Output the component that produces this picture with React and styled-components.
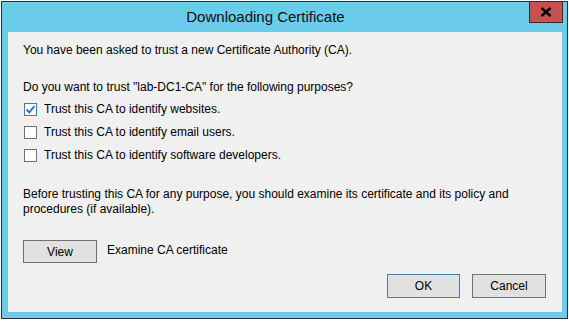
import React from "react";
import styled, { createGlobalStyle } from "styled-components";

const Global = createGlobalStyle`
  html, body { margin: 0; padding: 0; background: #ffffff; }
  body { font-family: "Segoe UI", "Liberation Sans", Arial, sans-serif; }
`;

const Window = styled.div`
  box-sizing: border-box;
  margin: 1px 0 0 1px;
  width: 567px;
  height: 318px;
  border: 1px solid #2d2d2d;
  background: #6acbea;
  display: flex;
  flex-direction: column;
`;

const TitleBar = styled.div`
  height: 29px;
  display: grid;
  grid-template-columns: 1fr auto;
  align-items: start;
`;

const Title = styled.div`
  font-family: "Segoe UI", "Liberation Sans", Arial, sans-serif;
  font-size: 15px;
  line-height: 29px;
  color: #111;
  text-align: center;
  padding-top: 0px;
`;

const CloseButton = styled.div`
  box-sizing: border-box;
  margin: -1px 4px 0 0;
  width: 34px;
  height: 22px;
  background: #c75050;
  border: 1px solid #3a2a2a;
  display: flex;
  align-items: center;
  justify-content: center;
`;

const Client = styled.div`
  box-sizing: border-box;
  flex: 1;
  margin: 0 5px 6px 6px;
  background: #f0f0f0;
  border-top: 1px solid #9fb4c2;
  padding: 11px 15px 0 15px;
  display: flex;
  flex-direction: column;
  font-size: 12px;
  line-height: 15px;
  color: #000;
`;

const Para = styled.p`
  margin: ${(p) => p.$mt || 0}px 0 0 0;
`;

const CheckList = styled.div`
  margin-top: 3px;
  display: flex;
  flex-direction: column;
`;

const CheckRow = styled.label`
  height: 23px;
  display: flex;
  align-items: center;
  gap: 7px;
  padding-left: 1px;
`;

const Box = styled.span`
  box-sizing: border-box;
  width: 13px;
  height: 13px;
  background: #fff;
  border: 1px solid ${(p) => (p.$checked ? "#3c7fb1" : "#707070")};
  display: flex;
  align-items: center;
  justify-content: center;
`;

const ViewRow = styled.div`
  margin-top: 23px;
  display: flex;
  align-items: center;
  gap: 10px;
`;

const Button = styled.div`
  box-sizing: border-box;
  width: ${(p) => p.$w || 74}px;
  height: ${(p) => p.$h || 23}px;
  background: #e1e1e1;
  border: 1px solid ${(p) => (p.$default ? "#3c7fb1" : "#707070")};
  display: flex;
  align-items: center;
  justify-content: center;
  padding-top: 1px;
`;

const RowLabel = styled.span`
  margin-top: -2px;
`;

const Footer = styled.div`
  margin-top: 11px;
  display: flex;
  justify-content: flex-end;
  gap: 12px;
  padding-right: 1px;
`;

function Check({ checked, children }) {
  return (
    <CheckRow>
      <Box $checked={checked}>
        {checked && (
          <svg width="11" height="11" viewBox="0 0 11 11">
            <path d="M1.5 5.5 L4.3 8.3 L9.5 2" fill="none" stroke="#2b6aa8" strokeWidth="1.8" />
          </svg>
        )}
      </Box>
      <span>{children}</span>
    </CheckRow>
  );
}

export default function App() {
  return (
    <>
      <Global />
      <Window>
        <TitleBar>
          <Title>Downloading Certificate</Title>
          <CloseButton>
            <svg width="12" height="10" viewBox="0 0 12 10">
              <path d="M1.5 1 L10.5 9 M10.5 1 L1.5 9" stroke="#000" strokeWidth="2.4" />
            </svg>
          </CloseButton>
        </TitleBar>
        <Client>
          <Para>You have been asked to trust a new Certificate Authority (CA).</Para>
          <Para $mt={22}>Do you want to trust "lab-DC1-CA" for the following purposes?</Para>
          <CheckList>
            <Check checked>Trust this CA to identify websites.</Check>
            <Check>Trust this CA to identify email users.</Check>
            <Check>Trust this CA to identify software developers.</Check>
          </CheckList>
          <Para $mt={20}>
            Before trusting this CA for any purpose, you should examine its certificate and its policy and
            <br />
            procedures (if available).
          </Para>
          <ViewRow>
            <Button>View</Button>
            <RowLabel>Examine CA certificate</RowLabel>
          </ViewRow>
          <Footer>
            <Button $default $w={73} $h={24}>OK</Button>
            <Button $w={74} $h={24}>Cancel</Button>
          </Footer>
        </Client>
      </Window>
    </>
  );
}
